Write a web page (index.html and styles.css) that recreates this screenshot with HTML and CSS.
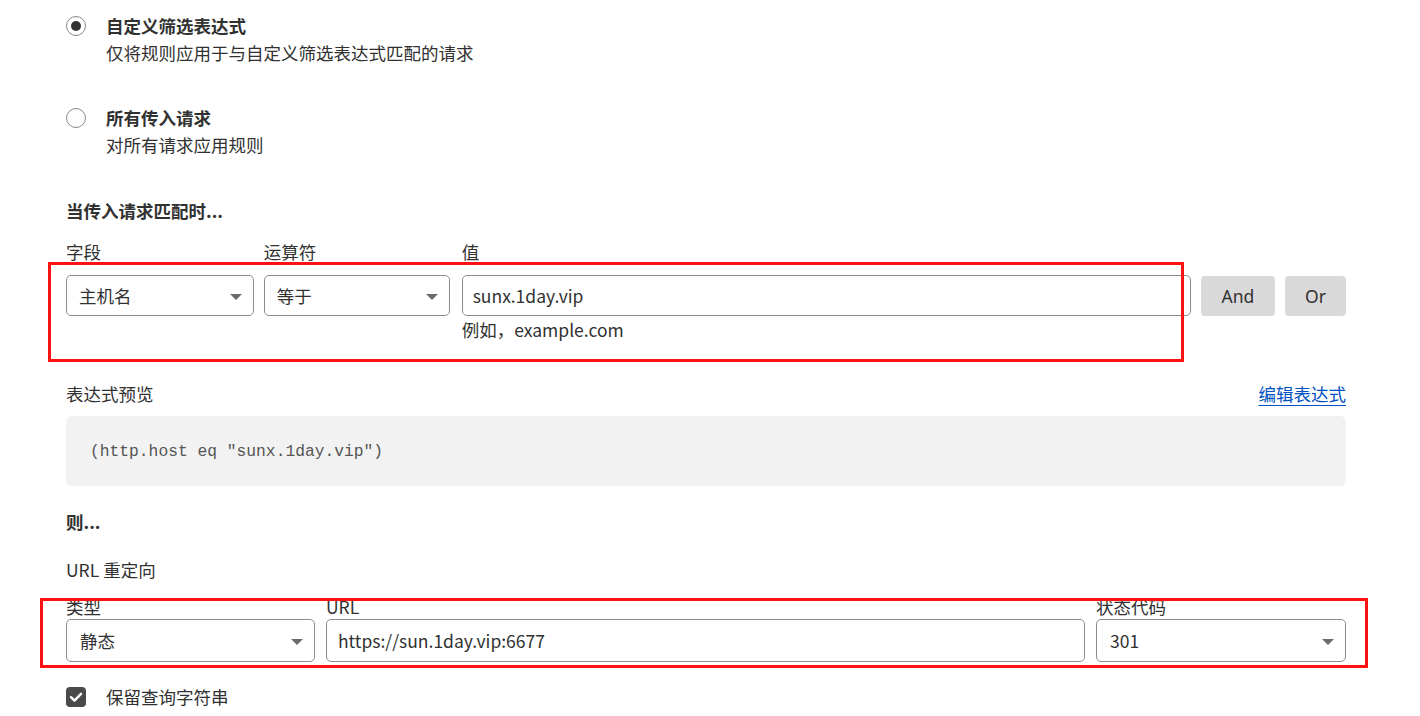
FILE: index.html
```html
<!DOCTYPE html>
<html lang="zh-CN">
<head>
<meta charset="utf-8">
<title>规则</title>
<link rel="stylesheet" href="styles.css">
</head>
<body>
<div class="page">
  <div class="radios">
    <div class="radio-item">
      <span class="radio checked"></span>
      <div class="radio-text">
        <div class="radio-title">自定义筛选表达式</div>
        <div class="radio-desc">仅将规则应用于与自定义筛选表达式匹配的请求</div>
      </div>
    </div>
    <div class="radio-item">
      <span class="radio"></span>
      <div class="radio-text">
        <div class="radio-title">所有传入请求</div>
        <div class="radio-desc">对所有请求应用规则</div>
      </div>
    </div>
  </div>

  <h3 class="heading h-match">当传入请求匹配时...</h3>

  <div class="expr-row">
    <div class="field f-field">
      <div class="label">字段</div>
      <div class="select">主机名<span class="caret"></span></div>
    </div>
    <div class="field f-op">
      <div class="label">运算符</div>
      <div class="select">等于<span class="caret"></span></div>
    </div>
    <div class="field f-value">
      <div class="label">值</div>
      <div class="input">sunx.1day.vip</div>
      <div class="help">例如，example.com</div>
    </div>
    <div class="buttons">
      <button class="btn btn-and">And</button>
      <button class="btn btn-or">Or</button>
    </div>
  </div>

  <div class="preview-head">
    <span class="label">表达式预览</span>
    <a class="link" href="#">编辑表达式</a>
  </div>
  <div class="code-box"><code>(http.host eq "sunx.1day.vip")</code></div>

  <h3 class="heading h-then">则...</h3>
  <div class="subhead">URL 重定向</div>

  <div class="redirect-row">
    <div class="field f-type">
      <div class="label label-tight">类型</div>
      <div class="select tall">静态<span class="caret"></span></div>
    </div>
    <div class="field f-url">
      <div class="label label-tight">URL</div>
      <div class="input tall">https://sun.1day.vip:6677</div>
    </div>
    <div class="field f-status">
      <div class="label label-tight">状态代码</div>
      <div class="select tall">301<span class="caret"></span></div>
    </div>
  </div>

  <div class="check-row">
    <span class="checkbox"><svg viewBox="0 0 20 20" width="20" height="20"><path d="M5 10.2 L8.5 13.6 L15 6.8" fill="none" stroke="#fff" stroke-width="2.4" stroke-linecap="round" stroke-linejoin="round"/></svg></span>
    <span class="check-label">保留查询字符串</span>
  </div>

  <div class="mark mark-1"></div>
  <div class="mark mark-2"></div>
</div>
</body>
</html>
```

FILE: styles.css
```css
* { box-sizing: border-box; }
html, body { margin: 0; padding: 0; background: #fff; }
body {
  font-family: "Noto Sans CJK SC", "Noto Sans", sans-serif;
  font-size: 17.5px;
  line-height: 26px;
  color: #313131;
}
.page {
  position: relative;
  width: 1420px;
  height: 716px;
  overflow: hidden;
  padding: 13px 74px 0 66px;
}
.radios { display: flex; flex-direction: column; gap: 39px; }
.radio-item { display: flex; align-items: flex-start; }
.radio {
  width: 20px; height: 20px;
  border: 1px solid #8a8a8a;
  border-radius: 50%;
  margin-top: 3px;
  margin-right: 20px;
  display: flex; align-items: center; justify-content: center;
  flex: none;
}
.radio.checked::after {
  content: "";
  width: 10px; height: 10px;
  border-radius: 50%;
  background: #313131;
}
.radio-title { font-weight: 700; }
.radio-desc { margin-top: 1px; }

.heading {
  margin: 0;
  font-size: 17.5px;
  line-height: 26px;
  font-weight: 700;
}
.h-match { margin-top: 40px; }

.expr-row { display: flex; margin-top: 15px; gap: 10px; align-items: flex-start; }
.field { display: flex; flex-direction: column; }
.label { line-height: 26px; }
.expr-row .label { margin-bottom: 10px; }
.f-field { width: 188px; }
.f-op { width: 186px; }
.f-value { width: 730px; margin-left: 2px; }
.select, .input {
  position: relative;
  height: 41px;
  border: 1px solid #8c8c8c;
  border-radius: 5px;
  padding: 0 12px;
  display: flex; align-items: center;
  background: #fff;
}
.input { padding-left: 10px; }
.tall { height: 43px; }
.caret {
  position: absolute;
  right: 11px; top: 50%;
  margin-top: -2px;
  width: 0; height: 0;
  border-left: 6px solid transparent;
  border-right: 6px solid transparent;
  border-top: 6px solid #6b6b6b;
}
.help { line-height: 26px; margin-top: 1px; }
.buttons { display: flex; gap: 10px; margin-top: 37px; }
.btn {
  font: inherit;
  font-family: "Noto Sans", "Noto Sans CJK SC", sans-serif;
  font-size: 17.5px;
  color: #313131;
  background: #d9d9d9;
  border: none;
  border-radius: 4px;
  height: 40px;
  padding: 0;
}
.btn-and { width: 74px; }
.btn-or { width: 61px; }

.preview-head {
  display: flex; justify-content: space-between; align-items: center;
  margin-top: 38px;
}
.link { color: #0051c3; text-decoration: underline; text-underline-offset: 4px; }
.code-box {
  margin-top: 9px;
  height: 70px;
  background: #f2f2f2;
  border-radius: 6px;
  padding: 2px 24px 0;
  display: flex; align-items: center;
}
.code-box code {
  font-family: "Liberation Mono", "DejaVu Sans Mono", monospace;
  font-size: 16.3px;
  color: #555;
}
.h-then { margin-top: 23px; }
.subhead { margin-top: 22px; }

.redirect-row { display: flex; gap: 11px; margin-top: 11px; }
.label-tight { line-height: 26px; margin-bottom: -1px; }
.f-type { width: 249px; }
.f-url { width: 759px; }
.f-status { width: 250px; }
.redirect-row .select { padding-left: 13px; }
.redirect-row .input { padding-left: 11px; }

.check-row { display: flex; align-items: center; margin-top: 22px; }
.checkbox {
  width: 20px; height: 20px;
  border-radius: 4px;
  background: #4a4a4a;
  margin-right: 20px;
  display: flex;
}

.mark {
  position: absolute;
  border: 3px solid #ff1010;
  pointer-events: none;
}
.mark-1 { left: 48px; top: 262px; width: 1136px; height: 100px; }
.mark-2 { left: 40px; top: 598px; width: 1328px; height: 70px; }
```
